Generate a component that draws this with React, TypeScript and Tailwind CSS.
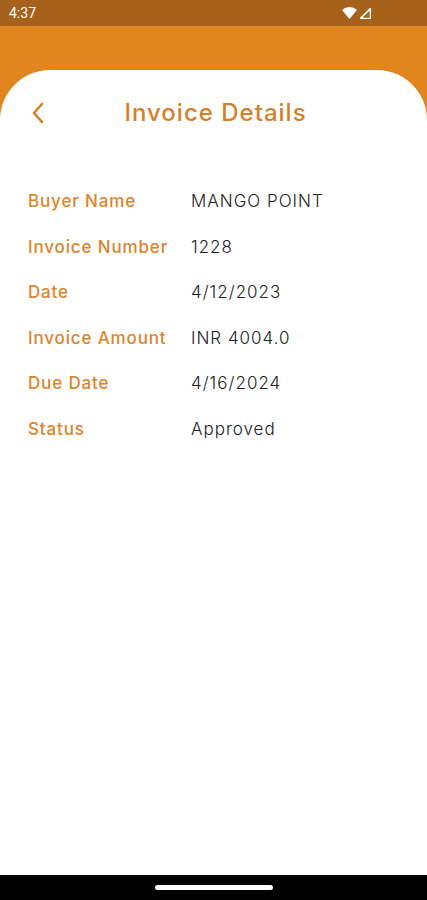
import React from 'react';

const rows = [
  { label: 'Buyer Name', value: 'MANGO POINT' },
  { label: 'Invoice Number', value: '1228' },
  { label: 'Date', value: '4/12/2023' },
  { label: 'Invoice Amount', value: 'INR 4004.0' },
  { label: 'Due Date', value: '4/16/2024' },
  { label: 'Status', value: 'Approved' },
];

const App: React.FC = () => {
  return (
    <div className="flex h-[900px] w-[427px] flex-col bg-[#e1851f] font-['Inter',sans-serif]">
      {/* status bar */}
      <div className="flex h-[26px] items-center justify-between bg-[#a6621a] px-[9px] text-white">
        <span className="font-['Roboto',sans-serif] text-[14px]">4:37</span>
        <div className="flex items-center gap-[3px] pr-[47px]">
          <svg width="15" height="12" viewBox="0 0 15 12">
            <path d="M7.5 12 L0 3 A11 11 0 0 1 15 3 Z" fill="white" />
          </svg>
          <svg width="11" height="11" viewBox="0 0 11 11">
            <path d="M10.5 0.5 L10.5 10.5 L0.5 10.5 Z" fill="none" stroke="white" strokeWidth="1.6" />
          </svg>
        </div>
      </div>

      <div className="h-[44px]" />

      <div className="flex flex-1 flex-col rounded-t-[50px] bg-white">
        <div className="relative flex h-[84px] items-center justify-center pt-[2px]">
          <svg
            className="absolute left-[31px] top-[32px]"
            width="14"
            height="22"
            viewBox="0 0 14 22"
          >
            <path d="M11 2 L3 11 L11 20" fill="none" stroke="#d67f2a" strokeWidth="2.6" strokeLinecap="round" strokeLinejoin="round" />
          </svg>
          <h1 className="pl-[4px] text-[24px] font-medium tracking-[1px] text-[#d67f2a]">Invoice Details</h1>
        </div>

        <div className="mt-[25px] flex flex-col px-[28px]">
          {rows.map((r) => (
            <div key={r.label} className="flex h-[45.6px] items-center text-[17px]">
              <span className="w-[163px] font-medium tracking-[0.85px] text-[#dc842b]">{r.label}</span>
              <span className="font-light tracking-[1px] text-[#222]">{r.value}</span>
            </div>
          ))}
        </div>
      </div>

      {/* nav bar */}
      <div className="flex h-[25px] items-center justify-center bg-black">
        <div className="h-[5px] w-[118px] rounded-full bg-white" />
      </div>
    </div>
  );
};

export default App;
